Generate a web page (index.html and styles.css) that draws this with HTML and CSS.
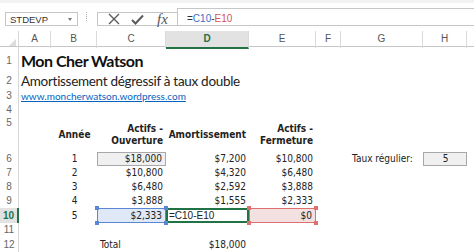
FILE: index.html
```html
<!DOCTYPE html>
<html lang="fr">
<head>
<meta charset="UTF-8">
<meta name="viewport" content="width=device-width, initial-scale=1.0">
<title>Mon Cher Watson</title>
<link rel="stylesheet" href="styles.css">
</head>
<body>

<div class="ribbon-edge"></div>

<div class="formula-bar">
  <div class="name-box">
    <span>STDEVP</span>
    <span class="caret"></span>
  </div>
  <div class="grip"></div>
  <div class="fx-tools">
    <svg class="tool" width="12" height="12" viewBox="0 0 12 12">
      <path d="M1 1 L11 11 M11 1 L1 11" stroke="#5a5a5a" stroke-width="1.4" fill="none"/>
    </svg>
    <svg class="tool" width="13" height="11" viewBox="0 0 13 11">
      <path d="M1 6 L4.5 9.5 L12 1.5" stroke="#5a5a5a" stroke-width="2" fill="none"/>
    </svg>
    <span class="fx">fx</span>
  </div>
  <div class="formula-input">=<span class="ref-c">C10</span>-<span class="ref-e">E10</span></div>
</div>

<div class="sheet">
  <!-- column headers -->
  <div class="row col-heads">
    <div class="corner"><span class="corner-tri"></span></div>
    <div class="col-head">A</div>
    <div class="col-head">B</div>
    <div class="col-head">C</div>
    <div class="col-head col-head-sel">D</div>
    <div class="col-head">E</div>
    <div class="col-head">F</div>
    <div class="col-head">G</div>
    <div class="col-head">H</div>
    <div class="col-head col-head-last"></div>
  </div>

  <div class="row row-title">
    <div class="row-head">1</div>
    <div class="cell span-rest title">Mon Cher Watson</div>
  </div>

  <div class="row row-sub">
    <div class="row-head">2</div>
    <div class="cell span-rest subtitle">Amortissement dégressif à taux double</div>
  </div>

  <div class="row">
    <div class="row-head">3</div>
    <div class="cell span-rest"><a class="link" href="#">www.moncherwatson.wordpress.com</a></div>
  </div>

  <div class="row">
    <div class="row-head">4</div>
  </div>

  <div class="row row-labels">
    <div class="row-head">5</div>
    <div class="cell col-b center bold">Année</div>
    <div class="cell col-c right bold">Actifs -<br>Ouverture</div>
    <div class="cell col-d right bold">Amortissement</div>
    <div class="cell col-e right bold">Actifs -<br>Fermeture</div>
  </div>

  <div class="row">
    <div class="row-head">6</div>
    <div class="cell col-b center">1</div>
    <div class="cell col-c right input-box">$18,000</div>
    <div class="cell col-d right">$7,200</div>
    <div class="cell col-e right">$10,800</div>
    <div class="cell col-g center">Taux régulier:</div>
    <div class="cell col-h center input-box">5</div>
  </div>

  <div class="row">
    <div class="row-head">7</div>
    <div class="cell col-b center">2</div>
    <div class="cell col-c right">$10,800</div>
    <div class="cell col-d right">$4,320</div>
    <div class="cell col-e right">$6,480</div>
  </div>

  <div class="row">
    <div class="row-head">8</div>
    <div class="cell col-b center">3</div>
    <div class="cell col-c right">$6,480</div>
    <div class="cell col-d right">$2,592</div>
    <div class="cell col-e right">$3,888</div>
  </div>

  <div class="row">
    <div class="row-head">9</div>
    <div class="cell col-b center">4</div>
    <div class="cell col-c right">$3,888</div>
    <div class="cell col-d right">$1,555</div>
    <div class="cell col-e right">$2,333</div>
  </div>

  <div class="row row-tall">
    <div class="row-head row-head-sel">10</div>
    <div class="cell col-b center">5</div>
    <div class="cell col-c right sel-blue">$2,333
      <span class="handle h-tl"></span><span class="handle h-tr"></span>
      <span class="handle h-bl"></span><span class="handle h-br"></span>
    </div>
    <div class="cell col-d active">=C10-E10</div>
    <div class="cell col-e right sel-red">$0
      <span class="handle h-tl"></span><span class="handle h-tr"></span>
      <span class="handle h-bl"></span><span class="handle h-br"></span>
    </div>
  </div>

  <div class="row">
    <div class="row-head">11</div>
  </div>

  <div class="row row-tall">
    <div class="row-head">12</div>
    <div class="cell col-c">Total</div>
    <div class="cell col-d right">$18,000</div>
  </div>
</div>

</body>
</html>
```

FILE: styles.css
```css
/* Page */
body {
  margin: 0;
  width: 474px;
  height: 252px;
  overflow: hidden;
  background-color: #fff;
  color: #222;
  font-family: "DejaVu Sans Condensed", "DejaVu Sans", sans-serif;
  font-size: 10px;
}

.ribbon-edge {
  height: 3px;
  background-color: #f3f3f3;
}

/* Formula bar */
.formula-bar {
  display: flex;
  align-items: flex-end;
  height: 23px;
  padding-left: 5px;
  margin-bottom: 5px;
}

.name-box {
  display: flex;
  align-items: center;
  justify-content: space-between;
  box-sizing: border-box;
  width: 73px;
  height: 14px;
  padding: 0 5px 0 4px;
  border: 1px solid #c6c6c6;
  font-family: "Liberation Sans", sans-serif;
  font-size: 9.5px;
  color: #333;
}

.caret {
  width: 0;
  height: 0;
  border-left: 2.5px solid transparent;
  border-right: 2.5px solid transparent;
  border-top: 3px solid #777;
}

.grip {
  align-self: center;
  margin: 4px 0 0 8px;
  height: 9px;
  border-left: 1px dotted #b0b0b0;
}

.fx-tools {
  display: flex;
  align-items: center;
  box-sizing: border-box;
  width: 80px;
  height: 14px;
  margin-left: 10px;
  padding-left: 10px;
  gap: 11px;
  border: 1px solid #c6c6c6;
  border-right: none;
}

.fx {
  font-family: "Liberation Serif", serif;
  font-style: italic;
  font-size: 15px;
  color: #555;
  line-height: 12px;
  margin-left: 2px;
}

.formula-input {
  flex: 1;
  box-sizing: border-box;
  height: 18px;
  padding: 4px 0 0 9px;
  border: 1px solid #c6c6c6;
  border-right: none;
  font-family: "Liberation Sans", sans-serif;
  font-size: 10px;
  color: #333;
}

.ref-c {
  color: #3c6cc6;
}

.ref-e {
  color: #d9534f;
}

/* Sheet grid */
.row {
  display: grid;
  grid-template-columns: 19px 32px 46px 69px 83px 67px 25px 82px 44px 1fr;
  height: 14px;
  line-height: 14px;
}

.row-title {
  height: 24px;
  line-height: 28px;
}

.row-sub {
  height: 18px;
  line-height: 20px;
}

.row-labels {
  height: 35px;
  line-height: 12px;
}

.row-tall {
  height: 15px;
  line-height: 15px;
}

.col-heads {
  height: 16px;
  line-height: 16px;
  border-bottom: 1px solid #c6c6c6;
  box-sizing: border-box;
}

.corner {
  position: relative;
  border-right: 1px solid #d6d6d6;
}

.corner-tri {
  position: absolute;
  right: 2px;
  bottom: 2px;
  width: 0;
  height: 0;
  border-left: 7px solid transparent;
  border-bottom: 7px solid #dcdcdc;
}

.col-head {
  text-align: center;
  border-right: 1px solid #dadada;
  font-family: "Liberation Sans", sans-serif;
  font-size: 10px;
  color: #555;
}

.col-head-sel {
  background-color: #e2e2e2;
  border-bottom: 2px solid #217346;
  color: #217346;
  font-weight: bold;
  margin-bottom: -1px;
}

.col-head-last {
  border-right: none;
}

.row-head {
  grid-column: 1;
  text-align: center;
  border-right: 1px solid #d6d6d6;
  font-family: "Liberation Sans", sans-serif;
  font-size: 10px;
  color: #666;
}

.row-head-sel {
  background-color: #e2e2e2;
  border-right: 2px solid #217346;
  color: #217346;
  font-weight: bold;
}

/* Cells */
.cell {
  box-sizing: border-box;
  padding: 0 2px 0 3px;
  white-space: nowrap;
}

.span-rest { grid-column: 2 / -1; padding-left: 2px; }
.col-b { grid-column: 3; }
.col-c { grid-column: 4; }
.col-d { grid-column: 5; }
.col-e { grid-column: 6; }
.col-g { grid-column: 8; }
.col-h { grid-column: 9; }

.right { text-align: right; padding-right: 3px; }
.center { text-align: center; }
.bold { font-weight: bold; }

.row-labels .cell {
  display: flex;
  flex-direction: column;
  justify-content: center;
}

.row-labels .right { align-items: flex-end; }
.row-labels .center { align-items: center; }

.title {
  font-family: "Lato", sans-serif;
  font-weight: bold;
  font-size: 16px;
  letter-spacing: -0.5px;
  color: #111;
}

.subtitle {
  font-family: "Lato", sans-serif;
  font-size: 13.5px;
  letter-spacing: -0.3px;
  color: #222;
}

.link {
  font-family: "Lato", sans-serif;
  font-size: 10px;
  color: #0563c1;
}

.input-box {
  background-color: #f0f0f0;
  border: 1px solid #a8a8a8;
  line-height: 12px;
}

/* Selection on row 10 */
.sel-blue,
.sel-red {
  position: relative;
  line-height: 13px;
}

.sel-blue {
  background-color: #dfe8f6;
  border: 1px solid #5b86d6;
}

.sel-red {
  background-color: #f3e0e0;
  border: 1px solid #e07070;
}

.active {
  border: 2px solid #217346;
  line-height: 11px;
  padding-left: 1px;
  font-family: "Liberation Sans", sans-serif;
}

.handle {
  position: absolute;
  width: 4px;
  height: 4px;
}

.sel-blue .handle { background-color: #5b86d6; }
.sel-red .handle { background-color: #e07070; }

.h-tl { left: -3px; top: -3px; }
.h-tr { right: -3px; top: -3px; }
.h-bl { left: -3px; bottom: -3px; }
.h-br { right: -3px; bottom: -3px; }
```
